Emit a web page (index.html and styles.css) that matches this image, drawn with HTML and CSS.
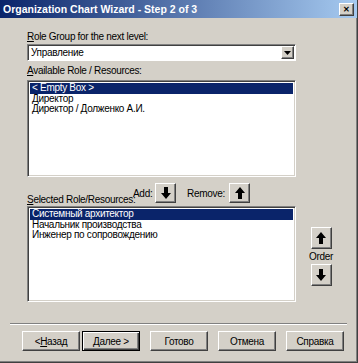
FILE: index.html
```html
<!DOCTYPE html>
<html lang="ru">
<head>
  <meta charset="UTF-8">
  <title>Organization Chart Wizard - Step 2 of 3</title>
  <link rel="stylesheet" href="styles.css">
</head>
<body>
  <div class="window">
    <div class="titlebar">
      <span class="title">Organization Chart Wizard - Step 2 of 3</span>
      <span class="close">&#x2715;</span>
    </div>
    <div class="content">
      <div class="lbl"><u>R</u>ole Group for the next level:</div>
      <div class="combo">
        <span class="combo-text">Управление</span>
        <span class="combo-btn"><svg width="7" height="4" viewBox="0 0 7 4"><path d="M0 0h7L3.5 4z" fill="#000"/></svg></span>
      </div>
      <div class="lbl lbl-avail"><u>A</u>vailable Role / Resources:</div>
      <div class="list list-avail">
        <div class="item sel">&lt; Empty Box &gt;</div>
        <div class="item">Директор</div>
        <div class="item">Директор / Долженко А.И.</div>
      </div>
      <div class="move-row">
        <span class="lbl lbl-sel"><u>S</u>elected Role/Resources:</span>
        <span class="lbl-small">Add:</span>
        <button class="btn arrow-btn"><svg width="10" height="12" viewBox="0 0 10 12"><path d="M3 0h4v6h3l-5 6-5-6h3z" fill="#000"/></svg></button>
        <span class="lbl-small lbl-remove">Remove:</span>
        <button class="btn arrow-btn"><svg width="10" height="12" viewBox="0 0 10 12"><path d="M3 12h4V6h3L5 0 0 6h3z" fill="#000"/></svg></button>
      </div>
      <div class="selected-row">
        <div class="list list-sel">
          <div class="item sel">Системный архитектор</div>
          <div class="item">Начальник производства</div>
          <div class="item">Инженер по сопровождению</div>
        </div>
        <div class="order">
          <button class="btn arrow-btn order-btn"><svg width="10" height="12" viewBox="0 0 10 12"><path d="M3 12h4V6h3L5 0 0 6h3z" fill="#000"/></svg></button>
          <span class="order-lbl">Order</span>
          <button class="btn arrow-btn order-btn"><svg width="10" height="12" viewBox="0 0 10 12"><path d="M3 0h4v6h3l-5 6-5-6h3z" fill="#000"/></svg></button>
        </div>
      </div>
    </div>
    <div class="separator"></div>
    <div class="footer">
      <button class="btn nav-btn">&lt; <u>Н</u>азад</button>
      <button class="btn nav-btn default">Далее &gt;</button>
      <button class="btn nav-btn gap-l">Готово</button>
      <button class="btn nav-btn">Отмена</button>
      <button class="btn nav-btn">Справка</button>
    </div>
  </div>
</body>
</html>
```

FILE: styles.css
```css
* { box-sizing: border-box; }
body { margin: 0; background: #d4d0c8; font-family: "Liberation Sans", Arial, sans-serif; font-size: 10px; letter-spacing: -0.3px; color: #000; }
.window { width: 358px; height: 363px; background: #d4d0c8; border-right: 1px solid #404040; border-bottom: 1px solid #404040; box-shadow: inset -1px -1px 0 #808080; }

.titlebar { height: 18px; display: flex; align-items: center; justify-content: space-between; padding: 0 3px 0 3px; background: linear-gradient(to right, #0a246a, #a6caf0); }
.title { color: #fff; font-weight: bold; font-size: 10.5px; letter-spacing: 0; }
.close { width: 15px; height: 13px; background: #d4d0c8; border: 1px solid; border-color: #fff #404040 #404040 #fff; box-shadow: inset -1px -1px 0 #808080; font-size: 8px; font-weight: bold; line-height: 11px; letter-spacing: 0; text-align: center; color: #000; }

.content { padding: 13px 0 0 27px; }
.lbl { height: 12px; line-height: 12px; white-space: nowrap; }
u { text-decoration: underline; text-underline-offset: 1px; }

.combo { width: 269px; height: 17px; margin-top: 1px; background: #fff; border: 1px solid; border-color: #808080 #fff #fff #808080; box-shadow: inset 1px 1px 0 #404040; display: flex; align-items: center; justify-content: space-between; padding: 0 1px 0 3px; }
.combo-btn { width: 13px; height: 13px; background: #d4d0c8; border: 1px solid; border-color: #fff #404040 #404040 #fff; box-shadow: inset -1px -1px 0 #808080; display: flex; align-items: center; justify-content: center; }

.lbl-avail { margin-top: 4px; }
.list { width: 269px; background: #fff; border: 1px solid; border-color: #808080 #fff #fff #808080; box-shadow: inset 1px 1px 0 #404040, inset -1px -1px 0 #d4d0c8; padding: 2px; }
.list-avail { height: 97px; margin-top: 3px; }
.item { height: 10.5px; line-height: 10.5px; padding-left: 2px; white-space: nowrap; }
.item.sel { background: #0a246a; color: #fff; }

.move-row { display: flex; align-items: flex-start; height: 20px; margin-top: 6px; }
.move-row > * { flex-shrink: 0; }
.lbl-sel { margin-top: 11px; width: 106px; }
.lbl-small { margin-top: 5px; width: 22px; }
.lbl-remove { margin-left: 11px; width: 42px; }

.btn { font: inherit; letter-spacing: inherit; color: #000; background: #d4d0c8; border: 1px solid; border-color: #fff #404040 #404040 #fff; box-shadow: inset -1px -1px 0 #808080; padding: 0; display: flex; align-items: center; justify-content: center; }
.arrow-btn { width: 21px; height: 20px; }

.selected-row { display: flex; margin-top: 3px; }
.list-sel { height: 96px; }
.order { display: flex; flex-direction: column; align-items: center; margin: 21px 0 0 14px; width: 22px; }
.order-btn { height: 22px; }
.order-lbl { height: 15px; line-height: 16px; }

.separator { margin: 21px 10px 0 10px; height: 2px; border-top: 1px solid #808080; border-bottom: 1px solid #fff; }
.footer { display: flex; padding: 6px 0 0 22px; }
.nav-btn { width: 58px; height: 20px; }
.nav-btn + .nav-btn { margin-left: 10px; }
.nav-btn.default { margin-left: 2px; border-color: #000; box-shadow: inset 1px 1px 0 #fff, inset -1px -1px 0 #404040, inset -2px -2px 0 #808080; }
```
